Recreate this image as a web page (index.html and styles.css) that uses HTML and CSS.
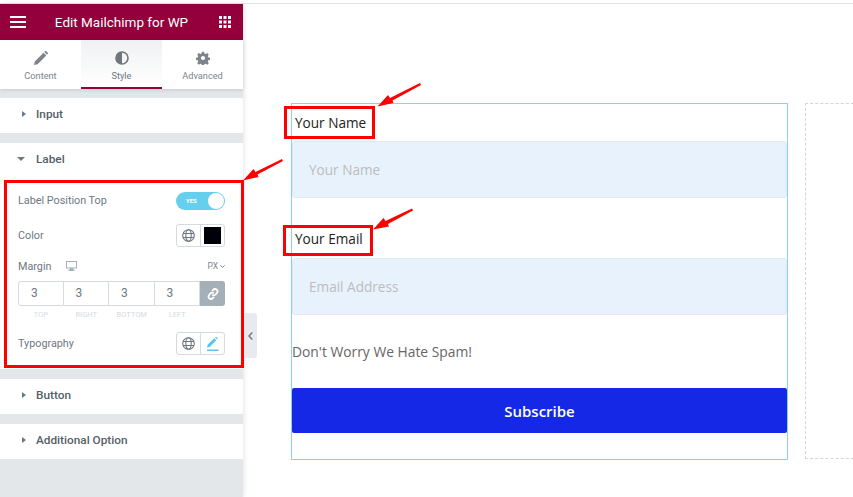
FILE: index.html
```html
<!DOCTYPE html>
<html lang="en">
<head>
  <meta charset="UTF-8">
  <meta name="viewport" content="width=device-width, initial-scale=1.0">
  <title>Edit Mailchimp for WP</title>
  <link rel="stylesheet" href="styles.css">
</head>
<body>
  <div class="editor">
    <aside class="panel">
      <header class="panel-head">
        <svg class="icon-menu" width="16" height="12" viewBox="0 0 16 12"><path d="M0 0h16v2H0zM0 5h16v2H0zM0 10h16v2H0z" fill="#fff"/></svg>
        <h1>Edit Mailchimp for WP</h1>
        <svg class="icon-grid" width="12" height="12" viewBox="0 0 12 12" fill="#fff"><path d="M0 0h3v3H0zM4.500 0h3v3h-3zM9 0h3v3H9zM0 4.500h3v3H0zM4.500 4.500h3v3h-3zM9 4.500h3v3H9zM0 9h3v3H0zM4.500 9h3v3h-3zM9 9h3v3H9z"/></svg>
      </header>

      <nav class="tabs">
        <div class="tab">
          <svg width="14" height="14" viewBox="0 0 14 14" fill="#7d848b"><path d="M0 14l.8-3.600L9.500 1.700l2.800 2.800-8.700 8.700zM10.300.9l.6-.6c.4-.4 1-.4 1.400 0l1.400 1.400c.4.400.4 1 0 1.400l-.6.6z"/></svg>
          <span>Content</span>
        </div>
        <div class="tab active">
          <svg width="14" height="14" viewBox="0 0 14 14"><circle cx="7" cy="7" r="6" fill="none" stroke="#6f767d" stroke-width="1.600"/><path d="M7 1a6 6 0 0 0 0 12z" fill="#6f767d"/></svg>
          <span>Style</span>
        </div>
        <div class="tab">
          <svg width="14" height="14" viewBox="0 0 14 14"><path d="M5.800 0h2.400l.4 2 1.300.6 1.800-1.100 1.700 1.700-1.100 1.800.5 1.300 2 .5v2.400l-2 .4-.5 1.300 1.100 1.800-1.700 1.700-1.800-1.100-1.300.5-.4 2H5.800l-.4-2-1.300-.5-1.800 1.100-1.700-1.700 1.100-1.800-.5-1.300-2-.4V6.800l2-.5.5-1.300L.6 3.200l1.700-1.700 1.800 1.100 1.300-.6z" transform="translate(.7 .7) scale(.9)" fill="#7d848b"/><circle cx="7" cy="7" r="2.100" fill="#fff"/></svg>
          <span>Advanced</span>
        </div>
      </nav>

      <section class="group">
        <div class="group-title"><i class="caret"></i>Input</div>
      </section>

      <section class="group">
        <div class="group-title"><i class="caret open"></i>Label</div>
        <div class="controls">
          <div class="control switch-row">
            <label>Label Position Top</label>
            <div class="switch"><span>YES</span><b></b></div>
          </div>
          <div class="control color-row">
            <label>Color</label>
            <div class="pair">
              <div class="pair-cell"><svg class="globe" width="13" height="13" viewBox="0 0 13 13" fill="none" stroke="#6d7882" stroke-width="1.100"><circle cx="6.500" cy="6.500" r="5.800"/><ellipse cx="6.500" cy="6.500" rx="2.700" ry="5.800"/><path d="M1 4.500h11M1 8.500h11"/></svg></div>
              <div class="pair-cell"><span class="swatch"></span></div>
            </div>
          </div>
          <div class="margin-head">
            <label>Margin</label>
            <svg width="11" height="10" viewBox="0 0 11 10" fill="#a4afb7"><path d="M0 0h11v7.500H7v1h1.500V10h-6V8.500H4v-1H0zM1 1v5.500h9V1z"/></svg>
            <span class="unit">PX<svg width="5" height="3" viewBox="0 0 5 3" fill="none" stroke="#7d848b"><path d="M.4.400l2.100 2 2.100-2"/></svg></span>
          </div>
          <div class="dimensions">
            <div class="dim">3</div>
            <div class="dim">3</div>
            <div class="dim">3</div>
            <div class="dim">3</div>
            <div class="dim-link"><svg width="12" height="12" viewBox="0 0 12 12" fill="none" stroke="#fff" stroke-width="1.800"><path d="M5 3.200l1.300-1.400a2.300 2.300 0 0 1 3.600 3.200L8.500 6.600a2.300 2.300 0 0 1-3.200 0"/><path d="M7 8.800l-1.300 1.400a2.300 2.300 0 0 1-3.600-3.200l1.400-1.600a2.300 2.300 0 0 1 3.200 0"/></svg></div>
          </div>
          <div class="dim-labels">
            <span>TOP</span><span>RIGHT</span><span>BOTTOM</span><span>LEFT</span>
          </div>
          <div class="control type-row">
            <label>Typography</label>
            <div class="pair">
              <div class="pair-cell"><svg class="globe" width="13" height="13" viewBox="0 0 13 13" fill="none" stroke="#6d7882" stroke-width="1.100"><circle cx="6.500" cy="6.500" r="5.800"/><ellipse cx="6.500" cy="6.500" rx="2.700" ry="5.800"/><path d="M1 4.500h11M1 8.500h11"/></svg></div>
              <div class="pair-cell"><svg width="12" height="14" viewBox="0 0 12 14" fill="#5bc4ea"><path d="M0 10.500l.6-2.700L7.200 1.200l2.100 2.100-6.600 6.600zM8 .5l.4-.4c.3-.2.700-.2 1 0l1 1c.3.300.3.700 0 1l-.4.400zM0 12.600h11.500V14H0z"/></svg></div>
            </div>
          </div>
        </div>
      </section>

      <section class="group">
        <div class="group-title"><i class="caret"></i>Button</div>
      </section>

      <section class="group">
        <div class="group-title"><i class="caret"></i>Additional Option</div>
      </section>

      <div class="collapse"><svg width="5" height="8" viewBox="0 0 5 8" fill="none" stroke="#6d7882" stroke-width="1.400"><path d="M4.300.6L1 4l3.300 3.400"/></svg></div>
    </aside>

    <main class="preview">
      <form class="signup">
        <label class="field-label">Your Name</label>
        <input class="field" type="text" placeholder="Your Name">
        <label class="field-label second">Your Email</label>
        <input class="field field-email" type="text" placeholder="Email Address">
        <p class="note">Don't Worry We Hate Spam!</p>
        <button type="button" class="subscribe">Subscribe</button>
      </form>
      <div class="dropzone"></div>
    </main>
  </div>

  <!-- annotations drawn on top of the screenshot -->
  <div class="mark mark-panel"></div>
  <div class="mark mark-name"></div>
  <div class="mark mark-email"></div>
  <svg class="arrows" width="853" height="497" viewBox="0 0 853 497" fill="#f00">
    <path d="M420 83L421 85 392.500 100.500 393.500 103 377.500 106.500 388 95 390 98z"/>
    <path d="M282 159L283 161 257.500 174.500 258.500 177 243 180.500 253.500 169 255.500 172z"/>
    <path d="M412 208.500L413 210.500 388 224 389 226.500 373 229.500 383.500 218 385.500 221z"/>
  </svg>
</body>
</html>
```

FILE: styles.css
```css
* {
  box-sizing: border-box;
}
body {
  margin: 0;
  height: 497px;
  overflow: hidden;
  background: #fff;
  font-family: Roboto, Arial, sans-serif;
  color: #6d7882;
}
.editor {
  display: flex;
  height: 497px;
  padding-top: 3px;
}
.editor::before {
  content: "";
  position: absolute;
  top: 3px;
  left: 0;
  right: 0;
  height: 1px;
  background: #e2e3e5;
}

/* left panel */
.panel {
  position: relative;
  flex: 0 0 243px;
  margin-top: 1px;
  background: #e4e7ea;
  box-shadow: 1px 0 5px rgba(0, 0, 0, 0.1);
}
.panel-head {
  display: flex;
  align-items: center;
  height: 36px;
  padding: 0 12px 0 10px;
  background: #93003c;
  color: #fff;
}
.panel-head h1 {
  flex: 1;
  margin: 0;
  padding-right: 2px;
  font-size: 13.500px;
  font-weight: 400;
  text-align: center;
}
.tabs {
  display: flex;
  height: 49px;
  margin-bottom: 9px;
  background: #fff;
  box-shadow: 0 1px 4px rgba(0, 0, 0, 0.12);
}
.tab {
  flex: 1;
  display: flex;
  flex-direction: column;
  align-items: center;
  padding-top: 11px;
  gap: 5px;
  font-size: 9.200px;
  color: #7d848b;
}
.tab.active {
  border-bottom: 2px solid #93003c;
  background: linear-gradient(#f0f1f3, #fff);
  color: #6d7882;
}
.group {
  margin-bottom: 10px;
  background: #fff;
}
.group-title {
  display: flex;
  align-items: center;
  height: 35px;
  padding: 0 0 3px 22px;
  font-size: 11.800px;
  font-weight: 500;
  color: #556068;
}
.caret {
  width: 0;
  height: 0;
  margin-right: 10px;
  border-left: 4px solid #6d7882;
  border-top: 3.500px solid transparent;
  border-bottom: 3.500px solid transparent;
}
.caret.open {
  margin-left: -5px;
  margin-right: 11px;
  border-top: 4px solid #6d7882;
  border-left: 4px solid transparent;
  border-right: 4px solid transparent;
  border-bottom: 0;
}
.controls {
  height: 191px;
  padding: 14px 18px 0;
  font-size: 10.800px;
}
.control {
  display: flex;
  align-items: center;
  justify-content: space-between;
}
.switch-row label {
  margin-top: -2px;
}
.switch-row {
  height: 18px;
}
.switch {
  position: relative;
  width: 49px;
  height: 18px;
  border-radius: 9px;
  background: #66cfee;
  font-size: 6px;
  font-weight: 700;
  line-height: 18px;
  color: #fff;
  padding-left: 10px;
}
.switch b {
  position: absolute;
  top: 1px;
  right: 1px;
  width: 16px;
  height: 16px;
  border-radius: 50%;
  background: #fff;
}
.color-row {
  margin-top: 14px;
}
.pair {
  display: flex;
  width: 49px;
  height: 23px;
  border: 1px solid #d5dadf;
  border-radius: 3px;
}
.pair-cell {
  flex: 1;
  display: flex;
  align-items: center;
  justify-content: center;
}
.pair-cell + .pair-cell {
  border-left: 1px solid #d5dadf;
}
.swatch {
  width: 17px;
  height: 17px;
  background: #000008;
}
.margin-head {
  display: flex;
  align-items: center;
  gap: 14px;
  height: 14px;
  margin-top: 12px;
}
.unit {
  display: flex;
  align-items: center;
  gap: 2px;
  margin-left: auto;
  font-size: 8.500px;
  color: #7d848b;
}
.dimensions {
  display: flex;
  height: 25px;
  margin-top: 8px;
}
.dim {
  flex: 0 0 45.500px;
  padding-left: 12px;
  border: 1px solid #d5dadf;
  border-left-width: 0;
  font-size: 12px;
  line-height: 22px;
  color: #6d7882;
}
.dim:first-child {
  border-left-width: 1px;
  border-radius: 3px 0 0 3px;
}
.dim-link {
  flex: 1;
  display: flex;
  align-items: center;
  justify-content: center;
  border-radius: 0 3px 3px 0;
  background: #a4afb7;
}
.dim-labels {
  display: flex;
  margin-top: 4px;
  font-size: 7.500px;
  line-height: 9px;
  color: #d5dadf;
}
.dim-labels span {
  flex: 0 0 45.500px;
  text-align: center;
}
.type-row {
  margin-top: 13px;
}
.collapse {
  position: absolute;
  top: 309px;
  left: 243px;
  display: flex;
  align-items: center;
  justify-content: center;
  width: 14px;
  height: 45px;
  background: #e8eaed;
  border-radius: 0 3px 3px 0;
}

/* preview area */
.preview {
  flex: 1;
  display: flex;
  align-items: flex-start;
  gap: 17px;
  padding: 100px 0 0 48px;
  overflow: hidden;
}
.signup {
  flex: 0 0 497px;
  height: 357px;
  display: flex;
  flex-direction: column;
  border: 1px solid #8ad3ef;
  font-family: "Open Sans", Arial, sans-serif;
}
.field-label {
  margin: 9px 0 0 3px;
  font-size: 13.600px;
  line-height: 19px;
  color: #222;
}
.field-label.second {
  margin-top: 31px;
}
.field {
  flex: 0 0 57px;
  margin-top: 9px;
  padding: 0 16px;
  border: 1px solid #e1e8f0;
  border-radius: 3px;
  background: #e8f2fc;
  font: 13.600px "Open Sans", Arial, sans-serif;
}
.field-email {
  margin-top: 10px;
}
.field::placeholder {
  color: #bdbdbd;
}
.note {
  margin: 27px 0 0;
  font-size: 13.850px;
  line-height: 19px;
  color: #666;
}
.subscribe {
  height: 45px;
  margin-top: 27px;
  border: none;
  border-radius: 2px;
  background: #1428e6;
  color: #fff;
  font: 600 15px "Open Sans", Arial, sans-serif;
}
.dropzone {
  flex: 0 0 100px;
  height: 356px;
  border: 1px dashed #d5d5d5;
}

/* red annotations */
.mark {
  position: absolute;
  border: 3px solid #f00;
}
.mark-panel {
  left: 4px;
  top: 180px;
  width: 240px;
  height: 188px;
}
.mark-name {
  left: 284px;
  top: 106px;
  width: 91px;
  height: 33px;
}
.mark-email {
  left: 283px;
  top: 225px;
  width: 90px;
  height: 31px;
}
.arrows {
  position: absolute;
  top: 0;
  left: 0;
  pointer-events: none;
}
```
